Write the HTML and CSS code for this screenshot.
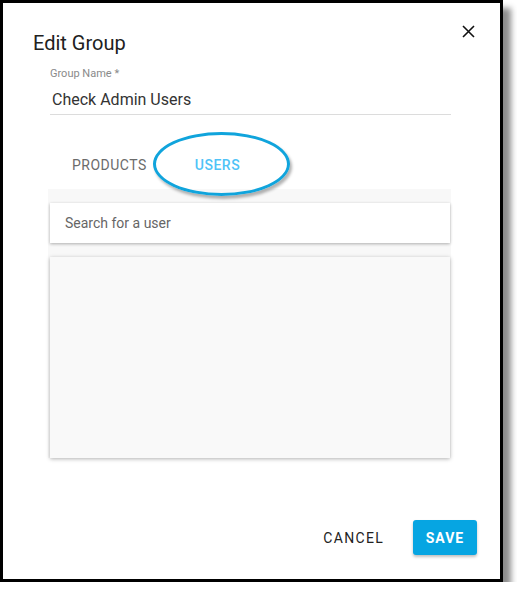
FILE: index.html
```html
<!DOCTYPE html>
<html>
<head>
<meta charset="utf-8">
<link rel="stylesheet" href="styles.css">
</head>
<body>
<div class="frame">
  <div class="dialog-head">
    <h1 class="title">Edit Group</h1>
    <button class="close" aria-label="Close">
      <svg width="13" height="13" viewBox="0 0 13 13"><path d="M1 1 L12 12 M12 1 L1 12" stroke="#111" stroke-width="1.6" fill="none"/></svg>
    </button>
  </div>
  <div class="body">
    <div class="field">
      <label class="field-label">Group Name *</label>
      <div class="field-value">Check Admin Users</div>
    </div>
    <div class="tabs">
      <div class="tab">PRODUCTS</div>
      <div class="tab active">USERS</div>
    </div>
    <div class="panel">
      <div class="search">Search for a user</div>
      <div class="list"></div>
    </div>
  </div>
  <div class="actions">
    <button class="btn-cancel">CANCEL</button>
    <button class="btn-save">SAVE</button>
  </div>
  <div class="highlight"></div>
</div>
</body>
</html>
```
FILE: styles.css
```css
html, body {
  margin: 0;
  padding: 0;
  background: #fff;
  font-family: Roboto, "Liberation Sans", sans-serif;
}
.frame {
  position: relative;
  box-sizing: border-box;
  width: 503px;
  height: 582px;
  border: 3px solid #000;
  background: #fff;
  box-shadow: 8px 8px 6px rgba(0, 0, 0, 0.45);
  display: flex;
  flex-direction: column;
}
.dialog-head {
  display: flex;
  justify-content: space-between;
  align-items: flex-start;
  padding: 28px 25px 0 30px;
}
.title {
  margin: 0;
  font-size: 20px;
  font-weight: 400;
  line-height: 24px;
  color: #212121;
}
.close {
  margin-top: -6px;
  border: 0;
  background: none;
  padding: 0;
  width: 13px;
  height: 13px;
  display: flex;
}
.body {
  padding: 0 49px 0 45px;
}
.field {
  margin-top: 12px;
  margin-left: 2px;
  border-bottom: 1px solid #dcdcdc;
  padding-bottom: 4px;
}
.field-label {
  display: block;
  font-size: 11px;
  line-height: 14px;
  color: #8a8a8a;
}
.field-value {
  margin-top: 9px;
  font-size: 16px;
  line-height: 20px;
  color: #333;
  padding-left: 2px;
}
.tabs {
  display: flex;
  height: 48px;
  margin-top: 26px;
}
.tab {
  padding: 0 24px;
  display: flex;
  align-items: center;
  font-size: 14px;
  font-weight: 400;
  letter-spacing: 0.5px;
  color: #6b6b6b;
}
.tab.active {
  color: #4fc3f7;
  font-weight: 500;
}
.panel {
  background: #f8f8f8;
  padding: 14px 1px 0 2px;
  width: 400px;
}
.search {
  background: #fff;
  height: 40px;
  box-sizing: border-box;
  padding: 0 15px;
  display: flex;
  align-items: center;
  font-size: 14px;
  color: #666;
  box-shadow: 0 1px 3px rgba(0, 0, 0, 0.3);
}
.list {
  margin-top: 14px;
  height: 201px;
  background: #f9f9f9;
  box-shadow: 0 1px 4px rgba(0, 0, 0, 0.3);
}
.actions {
  margin-top: auto;
  display: flex;
  justify-content: flex-end;
  align-items: center;
  gap: 29px;
  padding: 0 23px 24px 0;
}
.btn-cancel {
  border: 0;
  background: none;
  font-family: inherit;
  font-size: 14px;
  font-weight: 400;
  letter-spacing: 1.3px;
  color: #222;
  padding: 0;
}
.btn-save {
  border: 0;
  background: #06a5e2;
  color: #fff;
  font-family: inherit;
  font-size: 14px;
  font-weight: 700;
  letter-spacing: 1px;
  width: 64px;
  height: 35px;
  border-radius: 3px;
  box-shadow: 0 2px 3px rgba(0, 0, 0, 0.25);
  padding: 0;
}
.highlight {
  position: absolute;
  left: 150px;
  top: 129px;
  width: 137px;
  height: 64px;
  box-sizing: border-box;
  border: 3px solid #10a4dc;
  border-radius: 50%;
  box-shadow: 2px 3px 3px rgba(0, 0, 0, 0.3);
}
```
